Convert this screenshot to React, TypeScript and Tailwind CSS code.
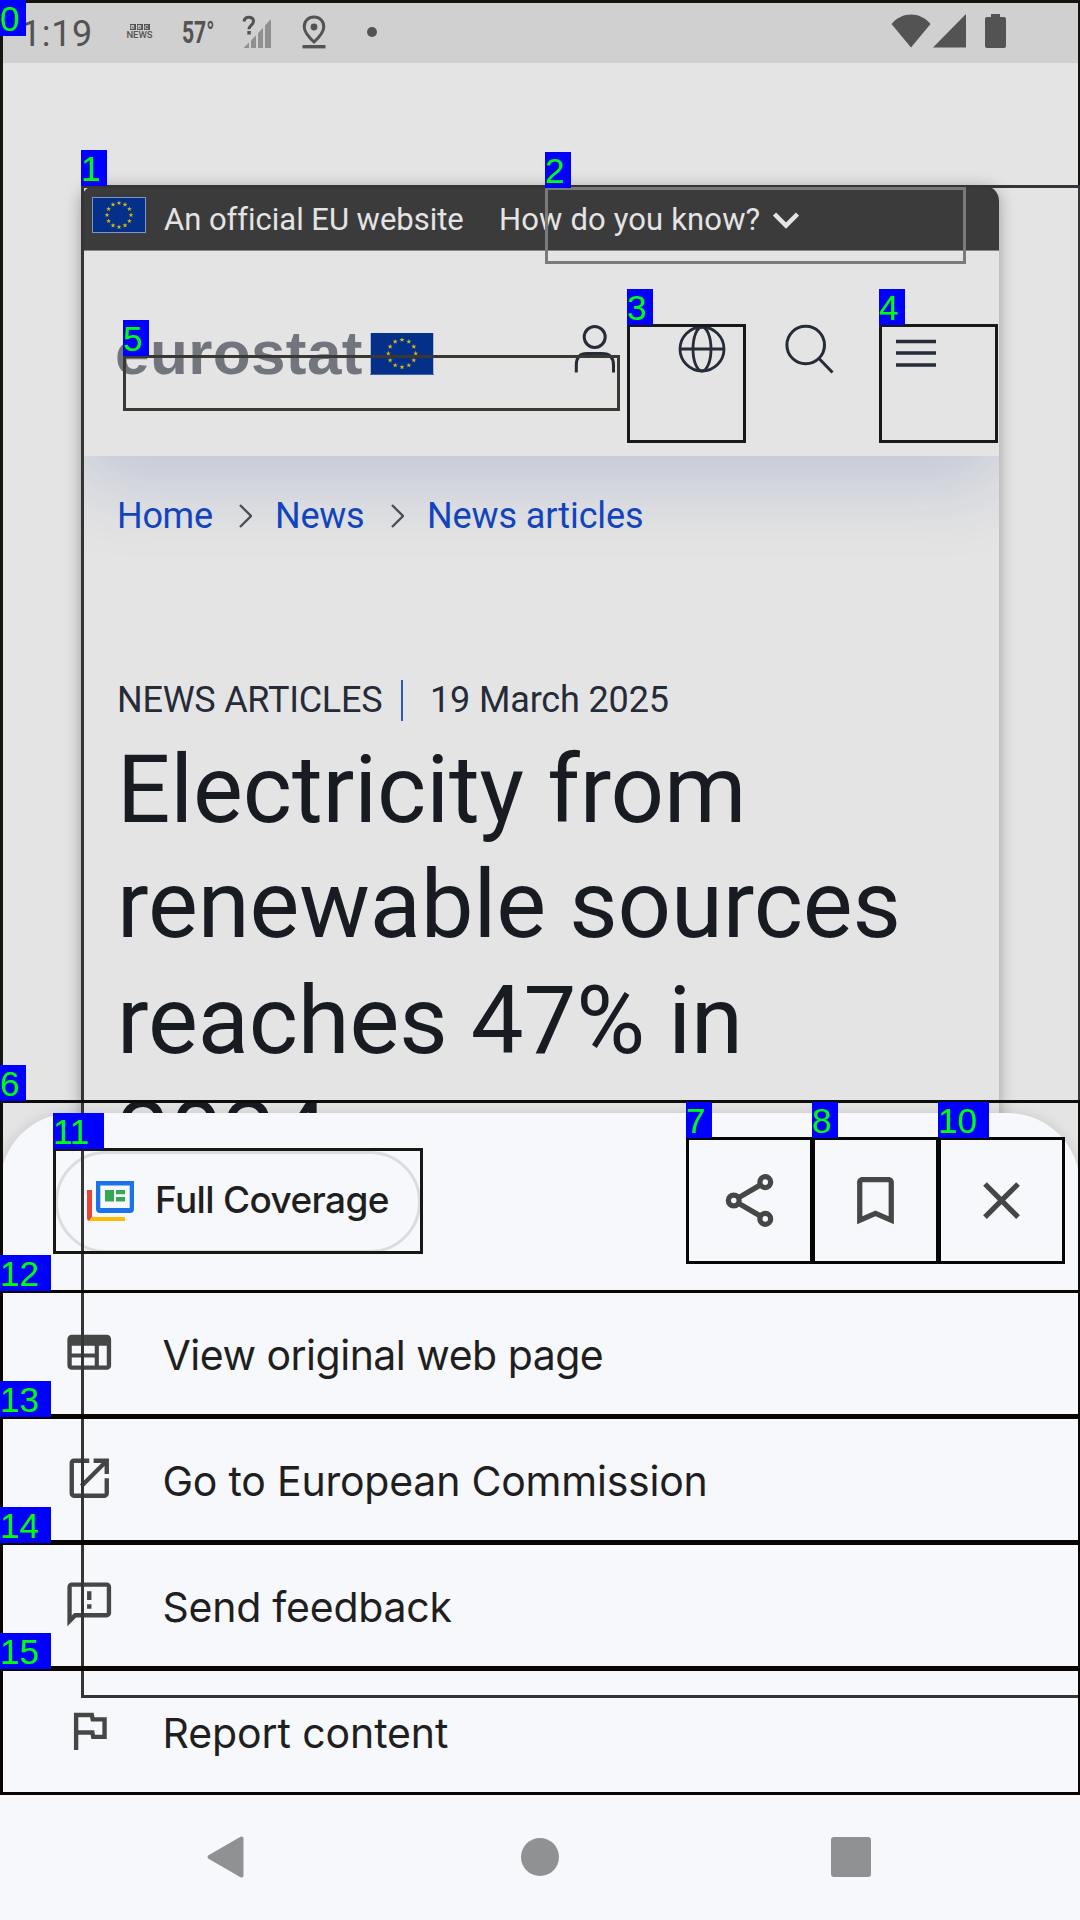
import React from 'react';

const STAR = '0,-1 0.225,-0.309 0.951,-0.309 0.363,0.118 0.588,0.809 0,0.382 -0.588,0.809 -0.363,0.118 -0.951,-0.309 -0.225,-0.309';

function Flag({ w, h, r, star, className }: { w: number; h: number; r: number; star: number; className: string }) {
  return (
    <svg viewBox={`0 0 ${w} ${h}`} width={w} height={h} className={className}>
      <rect width={w} height={h} fill="#04308a" />
      {Array.from({ length: 12 }, (_, i) => {
        const a = (i * Math.PI) / 6;
        return (
          <polygon
            key={i}
            points={STAR}
            fill="#dcb90a"
            transform={`translate(${w / 2 + r * Math.sin(a)} ${h / 2 - r * Math.cos(a)}) scale(${star})`}
          />
        );
      })}
    </svg>
  );
}

function StatusBar() {
  return (
    <div className="flex h-[63px] shrink-0 items-center bg-[#d0d0d0] pl-[21px] text-[#535353]">
      <div className="w-[104px] pt-[5px] text-[36px] leading-[40px] tracking-[0.6px]">1:19</div>
      <div className="flex w-[29px] flex-col items-center">
        <div className="flex gap-px">
          {['B', 'B', 'C'].map((c, i) => (
            <span key={i} className="h-[6px] w-[6px] bg-[#535353] text-center text-[6px] leading-[6px] font-bold text-[#d0d0d0]">{c}</span>
          ))}
        </div>
        <span className="text-[9.5px] leading-[10px] font-medium">NEWS</span>
      </div>
      <div className="ml-[28px] w-[60px]">
        <div className="origin-left scale-x-[0.66] text-[32px] leading-[36px] font-bold">57°</div>
      </div>
      <svg viewBox="0 0 30 34" width="30" height="34" className="shrink-0">
        <g fill="#909090">
          <path d="M2 33V32.5L7 27.500V33Z" />
          <path d="M9 33V25.500L14 20.300V33Z" />
          <path d="M16 33V18.300L21 12.800V33Z" />
          <path d="M23 33V10.600L29 4V33Z" />
        </g>
        <path d="M2 6.500C2.400 3.500 4 2.300 6.700 2.300c3 0 4.800 1.500 4.800 4 0 3.800-4.500 3.700-4.500 8" fill="none" stroke="#535353" strokeWidth="3" />
        <rect x="5.300" y="16" width="3.500" height="3.500" fill="#535353" />
      </svg>
      <svg viewBox="0 0 24 34" width="24" height="34" className="ml-[30px] shrink-0">
        <path d="M12 2C6.300 2 2.200 6.200 2.200 11.800c0 5.700 4.300 10.200 9.800 15.200 5.500-5 9.800-9.500 9.800-15.200C21.800 6.200 17.700 2 12 2Z" fill="none" stroke="#535353" strokeWidth="3" />
        <circle cx="12" cy="12" r="3.400" fill="#535353" />
        <rect x="0.500" y="30" width="23" height="3.400" fill="#535353" />
      </svg>
      <div className="ml-[41px] h-[10px] w-[10px] rounded-full bg-[#535353]" />
      <div className="ml-auto flex items-center pr-[74px]">
        <svg viewBox="0 0 40 34" width="40" height="34" fill="#535353" className="mb-px">
          <path d="M0.500 10C11-2.700 29-2.700 39.500 10L20 33.500Z" />
        </svg>
        <svg viewBox="0 0 33 34" width="33" height="34" fill="#535353" className="mb-px ml-[2px]">
          <path d="M33 0V33.500H0Z" />
        </svg>
        <svg viewBox="0 0 21 34" width="21" height="34" fill="#535353" className="mb-px ml-[19px]">
          <path d="M6 0h9v3h4q2 0 2 2V32q0 2-2 2H2q-2 0-2-2V5q0-2 2-2h4Z" />
        </svg>
      </div>
    </div>
  );
}

function Crumb() {
  return (
    <svg viewBox="0 0 13 24" width="13" height="24" className="mr-[23px] shrink-0" fill="none" stroke="#4b4e58" strokeWidth="2.400">
      <path d="M1 1L12 12L1 23" />
    </svg>
  );
}

function WebPage() {
  return (
    <div className="ml-[81px] mt-[122px] h-[1000px] w-[918px] shrink-0 rounded-t-[16px] bg-[#e4e4e4] shadow-[0_3px_16px_rgba(0,0,0,0.32)]">
      <div className="flex h-[65px] items-center rounded-t-[16px] bg-[#3b3b3b] pl-[11px] text-[31px] text-[#e4e4e4]">
        <Flag w={52} h={34} r={12} star={2.6} className="mb-[5px] box-content border border-[#7d95c8]" />
        <span className="ml-[18px] w-[335px] pt-[6px] tracking-[-0.03px] whitespace-nowrap">An official EU website</span>
        <span className="pt-[6px] tracking-[0.15px] whitespace-nowrap">How do you know?</span>
        <svg viewBox="0 0 26 17" width="26" height="17" className="mt-[6px] ml-[13px]" fill="none" stroke="#e4e4e4" strokeWidth="4.500">
          <path d="M1.500 2L13 13.500L24.500 2" />
        </svg>
      </div>
      <div className="overflow-hidden">
        <header className="relative flex h-[206px] items-center border-t border-[#8a8a8a] bg-[#e4e4e4] pl-[34px] shadow-[0_24px_80px_0_rgba(9,49,142,0.18)]">
          <span className="w-[255px] pb-[2px] font-['Liberation_Sans',sans-serif] text-[62px] leading-[70px] font-bold tracking-[0.4px] text-[#72757e]">eurostat</span>
          <Flag w={64} h={42} r={14} star={2.7} className="border-b border-[#3d60ac]" />
          <svg viewBox="0 0 42 48" width="42" height="48" className="mb-[10px] ml-[140px]" fill="none" stroke="#262b38" strokeWidth="3">
            <circle cx="20.700" cy="12" r="10.500" />
            <path d="M2.300 47.500V40C2.300 32 6 28.500 13 28.500H28C35 28.500 39.500 32 39.500 40V47.500" />
          </svg>
          <svg viewBox="0 0 48 48" width="48" height="48" className="mb-[10px] ml-[62px]" fill="none" stroke="#262b38" strokeWidth="2.800">
            <circle cx="24" cy="24" r="22" />
            <ellipse cx="24" cy="24" rx="9" ry="22" />
            <path d="M2 24H46" />
          </svg>
          <svg viewBox="0 0 49 50" width="49" height="50" className="mb-[9px] ml-[59px]" fill="none" stroke="#262b38" strokeWidth="3">
            <circle cx="20.700" cy="21" r="18.800" />
            <path d="M34 34.500L47.500 48.500" />
          </svg>
          <svg viewBox="0 0 40 28" width="40" height="28" className="mb-[2px] ml-[62px]" stroke="#262b38" strokeWidth="3.600">
            <path d="M0 2.500H40M0 14H40M0 26H40" />
          </svg>
        </header>
        <div className="relative pl-[36px]">
          <nav className="mt-[40px] flex h-[40px] items-center text-[36px] leading-[40px] text-[#1245bd]">
            <span className="w-[122px] shrink-0 tracking-[-0.3px]">Home</span>
            <Crumb />
            <span className="w-[116px] shrink-0 tracking-[-0.3px]">News</span>
            <Crumb />
            <span className="tracking-[-0.1px]">News articles</span>
          </nav>
          <div className="mt-[144px] flex h-[40px] items-center text-[36px] leading-[40px] text-[#262b38]">
            <span className="w-[284px] tracking-[-0.25px] whitespace-nowrap">NEWS ARTICLES</span>
            <span className="h-[41px] w-[2px] bg-[#2b59cb]" />
            <span className="ml-[27px] tracking-[-0.15px]">19 March 2025</span>
          </div>
          <h1 className="mt-[13px] text-[94px] leading-[115.4px] tracking-[-0.1px] text-[#181b22]">
            Electricity from<br />renewable sources<br />reaches 47% in<br />2024
          </h1>
        </div>
      </div>
    </div>
  );
}

const menu = [
  { label: 'View original web page', cls: 'tracking-[-0.5px]', d: 'M20 4H4C2.900 4 2 4.900 2 6V18C2 19.100 2.900 20 4 20H20C21.100 20 22 19.100 22 18V6C22 4.900 21.100 4 20 4ZM4 9H14.500V12.600H4ZM4 14.400H14.500V18H4ZM16.400 9H20V18H16.400Z' },
  { label: 'Go to European Commission', cls: 'tracking-[-0.22px]', d: 'M19 19H5V5h7V3H5c-1.110 0-2 .9-2 2v14c0 1.100.890 2 2 2h14c1.100 0 2-.9 2-2v-7h-2v7zM14 3v2h3.590l-9.830 9.830 1.410 1.410L19 6.410V10h2V3h-7z' },
  { label: 'Send feedback', cls: 'tracking-[-0.24px]', d: 'M20 2H4c-1.100 0-1.990.9-1.990 2L2 22l4-4h14c1.100 0 2-.9 2-2V4c0-1.100-.9-2-2-2zm0 14H5.170l-1.170 1.170V4h16v12zm-9-4h2v2h-2zm0-6h2v4h-2z' },
  { label: 'Report content', cls: 'tracking-[-0.1px]', d: 'M12.360 6l.4 2H18v6h-3.360l-.4-2H7V6h5.360M14 4H5v17h2v-7h5.600l.4 2h7V6h-5.600L14 4z' },
];

function Sheet() {
  return (
    <div className="relative -mt-[72px] flex h-[807px] shrink-0 flex-col rounded-t-[72px] bg-[#f7f8fc] font-['Inter',sans-serif] text-[#1f1f1f] shadow-[0_0_14px_rgba(0,0,0,0.13)]">
      <div className="flex h-[177px] items-center pr-[16px] pb-[2px] pl-[55px]">
        <button className="mt-[2px] flex h-[102px] w-[366px] items-center rounded-full border-[3px] border-[#dbdce0] pb-[2px] pl-[29px]">
          <svg viewBox="0 0 48 42" width="48" height="42" className="shrink-0">
            <path d="M0 10H5V37L2 41Q0 40.500 0 38Z" fill="#ea4335" />
            <path d="M5 37H38V41H2Z" fill="#fbbc04" />
            <path d="M9 1H47V29Q47 33 43 33H13Q9 33 9 29ZM13.300 5.500V28H42.700V5.500Z" fill="#1a73e8" fillRule="evenodd" />
            <path d="M18 10H27V21.500H18ZM29 10H38V14.300H29ZM29 17H38V21.500H29Z" fill="#34a853" />
          </svg>
          <span className="ml-[20px] pb-px text-[37px] leading-[44px] font-medium tracking-[-0.65px] whitespace-nowrap">Full Coverage</span>
        </button>
        <div className="ml-auto flex">
          <button className="flex h-[126px] w-[126px] items-center justify-center">
            <svg viewBox="0 0 24 24" width="63" height="63" fill="none" stroke="#444746" strokeWidth="2">
              <path d="M16.200 6.050L7.800 10.950M7.800 13.050L16.200 17.950" />
              <circle cx="18" cy="5" r="2.050" />
              <circle cx="6" cy="12" r="2.050" />
              <circle cx="18" cy="19" r="2.050" />
            </svg>
          </button>
          <button className="flex h-[126px] w-[126px] items-center justify-center">
            <svg viewBox="0 0 24 24" width="63" height="63" fill="#444746">
              <path d="M17 3H7c-1.100 0-2 .9-2 2v16l7-3 7 3V5c0-1.100-.9-2-2-2zm0 15l-5-2.180L7 18V5h10v13z" />
            </svg>
          </button>
          <button className="flex h-[126px] w-[126px] items-center justify-center">
            <svg viewBox="0 0 24 24" width="63" height="63" fill="#444746">
              <path d="M19 6.410L17.590 5 12 10.590 6.410 5 5 6.410 10.590 12 5 17.590 6.410 19 12 13.410 17.590 19 19 17.590 13.410 12z" />
            </svg>
          </button>
        </div>
      </div>
      {menu.map((m) => (
        <div key={m.label} className="flex h-[126px] items-center pl-[63px]">
          <svg viewBox="0 0 24 24" width="52.500" height="52.500" fill="#444746" fillRule="evenodd" className="mb-px shrink-0">
            <path d={m.d} />
          </svg>
          <span className={`ml-[47px] pt-[3px] text-[41px] leading-[50px] ${m.cls}`}>{m.label}</span>
        </div>
      ))}
      <div className="flex h-[126px] items-center pl-[206px]">
        <svg viewBox="0 0 38 44" width="38" height="44" className="shrink-0">
          <path d="M3.500 22L35.500 3.500V40.500Z" fill="#909192" stroke="#909192" strokeWidth="4" strokeLinejoin="round" />
        </svg>
        <div className="ml-[277px] h-[38px] w-[38px] rounded-full bg-[#909192]" />
        <div className="ml-[272px] h-[40px] w-[40px] rounded-[3px] bg-[#909192]" />
      </div>
    </div>
  );
}

const frames = [
  'left-0 top-0 w-[1081px] h-[1795px] border-[#15140f]',
  'left-[81px] top-[185px] w-[1000px] h-[1513px] border-[#363535]',
  'left-[545px] top-[187px] w-[421px] h-[77px] border-[#7a7a7a]',
  'left-[627px] top-[324px] w-[119px] h-[119px] border-[#191919]',
  'left-[879px] top-[324px] w-[119px] h-[119px] border-[#191919]',
  'left-[123px] top-[355px] w-[497px] h-[56px] border-[#3a3832]',
  'left-0 top-[1100px] w-[1081px] h-[695px] border-[#0d0c0b]',
  'left-[686px] top-[1137px] w-[127px] h-[127px] border-[#060606]',
  'left-[812px] top-[1137px] w-[127px] h-[127px] border-[#060606]',
  'left-[938px] top-[1137px] w-[127px] h-[127px] border-[#060606]',
  'left-[53px] top-[1148px] w-[370px] h-[106px] border-[#191713]',
  'left-0 top-[1290px] w-[1081px] h-[127px] border-[#080503]',
  'left-0 top-[1416px] w-[1081px] h-[127px] border-[#080503]',
  'left-0 top-[1542px] w-[1081px] h-[127px] border-[#080503]',
  'left-0 top-[1668px] w-[1081px] h-[127px] border-[#080503]',
];

const tags: [string, string][] = [
  ['0', 'left-0 top-0 w-[26px]'],
  ['1', 'left-[81px] top-[150px] w-[26px]'],
  ['2', 'left-[545px] top-[152px] w-[26px]'],
  ['3', 'left-[627px] top-[289px] w-[26px]'],
  ['4', 'left-[879px] top-[289px] w-[26px]'],
  ['5', 'left-[123px] top-[320px] w-[26px]'],
  ['6', 'left-0 top-[1065px] w-[26px]'],
  ['7', 'left-[686px] top-[1102px] w-[26px]'],
  ['8', 'left-[812px] top-[1102px] w-[26px]'],
  ['10', 'left-[938px] top-[1102px] w-[51px]'],
  ['11', 'left-[53px] top-[1113px] w-[51px]'],
  ['12', 'left-0 top-[1255px] w-[51px]'],
  ['13', 'left-0 top-[1381px] w-[51px]'],
  ['14', 'left-0 top-[1507px] w-[51px]'],
  ['15', 'left-0 top-[1633px] w-[51px]'],
];

export default function App() {
  return (
    <div className="relative flex h-[1920px] w-[1080px] flex-col overflow-hidden bg-[#e4e4e4] font-['Roboto',sans-serif]">
      <div className="flex h-[1185px] shrink-0 flex-col overflow-hidden">
        <StatusBar />
        <WebPage />
      </div>
      <Sheet />
      <div className="pointer-events-none absolute inset-0 overflow-hidden">
        {frames.map((f) => (
          <div key={f} className={`absolute border-[3px] ${f}`} />
        ))}
        {tags.map(([t, c]) => (
          <div key={t} className={`absolute h-[36px] bg-[#0000ff] font-['Liberation_Sans',sans-serif] text-[35px] leading-[38px] text-[#00ff00] ${c}`}>{t}</div>
        ))}
      </div>
    </div>
  );
}
